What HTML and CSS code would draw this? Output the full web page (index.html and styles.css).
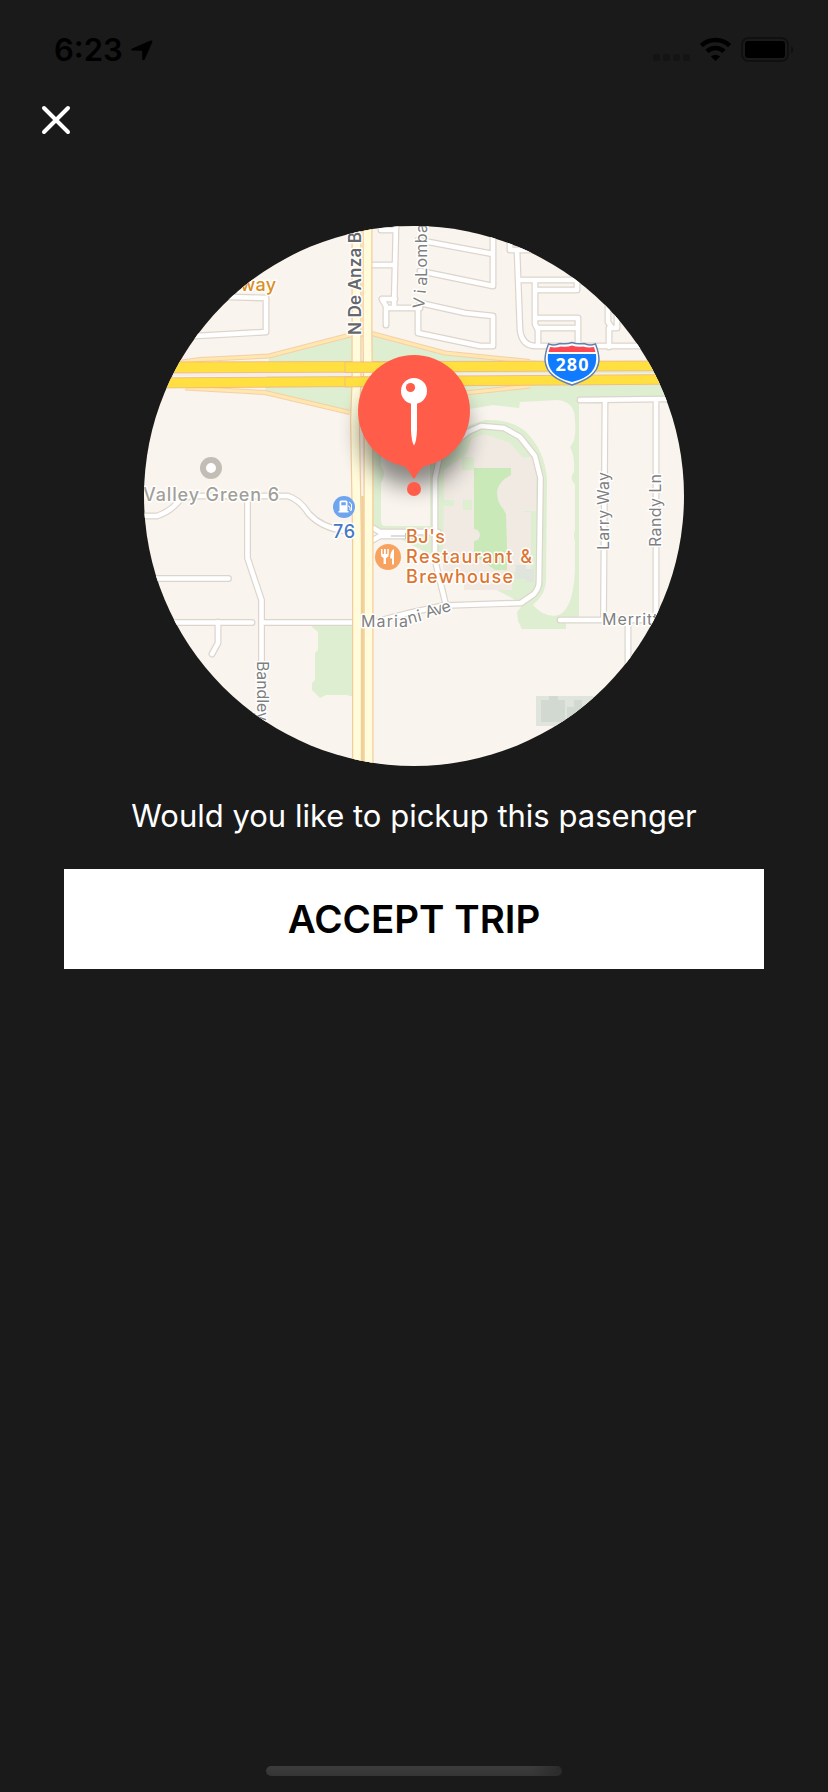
FILE: index.html
```html
<!DOCTYPE html>
<html lang="en">
<head>
<meta charset="utf-8">
<title>Pickup</title>
<link rel="stylesheet" href="styles.css">
</head>
<body>
<div class="screen">
  <header class="status">
    <div class="clock">
      <span class="time">6:23</span>
      <svg class="location" width="22" height="21" viewBox="0 0 22 21"><path d="M1.2 8.6 L19.6 0.5 Q22 0 21.2 2.2 L13.8 19.3 Q12.2 21.3 11.2 19.2 V11.4 Q11.2 10.7 10.5 10.7 L1.4 10.6 Q-.8 9.8 1.2 8.6Z"/></svg>
    </div>
    <svg class="indicators" width="142" height="26" viewBox="0 0 142 26">
      <g fill="#141414"><rect x="0" y="17" width="7" height="7" rx="2"/><rect x="10" y="17" width="7" height="7" rx="2"/><rect x="20" y="17" width="7" height="7" rx="2"/><rect x="30" y="17" width="7" height="7" rx="2"/></g>
      <g fill="none" stroke="#000" stroke-width="4.6"><path d="M48.4 8.6 A20.5 20.5 0 0 1 76.6 8.6"/><path d="M54 14.4 A12.5 12.5 0 0 1 71 14.4"/></g>
      <path d="M62.500 24.100 L57.900 19.500 A7 7 0 0 1 67.100 19.500Z"/>
      <rect x="89" y="1" width="46" height="23" rx="6.500" fill="none" stroke="#101010" stroke-width="2"/>
      <rect x="92" y="4" width="40" height="17" rx="3"/>
      <path d="M138.200 9 A4.500 4.500 0 0 1 138.200 16.500Z" fill="#101010"/>
    </svg>
  </header>
  <nav class="nav">
    <svg width="30" height="30" viewBox="0 0 30 30"><path d="M3 3 L27 27 M27 3 L3 27" stroke="#fff" stroke-width="4" stroke-linecap="round"/></svg>
  </nav>
  <main class="pickup">
    <svg class="map" width="540" height="540" viewBox="144 226 540 540">
      <defs>
        <clipPath id="disc"><circle cx="414" cy="496" r="270"/></clipPath>
        <filter id="soft" x="-50%" y="-50%" width="200%" height="200%"><feGaussianBlur stdDeviation="11"/></filter>
        <g id="streets" fill="none">
          <path d="M230 297 L266 298 V332 L196 336"/>
          <path d="M396 226 L394 308 M372 265 H394 M381 230 H396 M382 299 L386 306 V325 M382 299 H395 M387 308 H420"/>
          <path d="M418 240 L493 254 M493 230 V286 L420 271 M420 303 L465 313 L493 316 V346 H480 L418 333 V306"/>
          <path d="M510 240 V250 H530 M517 250 L520 330 Q522 346 536 346 H645 M519 280 H577 V290 H536 M535 280 V324 L538 330 V346 M535 318 H578 V346 M538 328 H577 M608 304 V322 L612 328 H617 V316 M609 328 V347"/>
          <path d="M580 400 L668 399 M605 402 L603.500 620 M656 402 V619 M560 620 H690 M628 622 V680"/>
          <path d="M468 432 L481 426 L504 428 L520 437 L535 456 L540.500 478 L539 582 Q539 588 534 594 L521 603 L446 605.500 L435 560 V478 L440 455 L468 432"/>
          <path d="M446 605 Q410 612 374 622 M144 516 H157 Q170 512 180 500 L190 496 H288 Q300 500 309 514 Q322 528 345 531 M247.500 500 V558 L261.500 600 V710 M150 578.500 H228.500 M160 622.500 H252 M218 622 V643 L212 654 M263 622.500 H354 M373 528 L380 532 H438 M373 540 L380 536 H410"/>
        </g>
        <g id="anza" fill="none">
          <path d="M356.500 220 V380 L355 420 L357 540 V780"/>
          <path d="M367.500 220 V340 L368.500 420 V780"/>
        </g>
        <path id="ramps" fill="none" d="M175 363 L200 359.500 L269 356 L350 335 L372 333.500 L445 353 L530 361.500 M185 388 L265 392.500 L350 412.500 M465 393 L530 386"/>
      </defs>
      <g clip-path="url(#disc)">
        <rect class="land" x="144" y="226" width="540" height="540"/>
        <path class="park" d="M269 358 L354 335 H372 L440 353 L545 361 H690 V400 L579 402 V617 H566 V629 H522 L518 621 L517 612 L523 604 L380 528 H372 V400 L354 414 L265 391Z"/>
        <path class="land" d="M385 526 Q381 526 381 520 V483 Q387 472 381 466 V450 H430 V526Z"/>
        <path class="land" d="M464 410 L493 405 L519 408 L520 402 L558 400 Q575 402 575 420 Q577 440 570 447 Q575 455 574 472 Q569 478 575 485 L575 530 Q573 536 575 541 V570 Q573 615 554 616 Q541 615 533 605 Q546 594 546 580 L547 480 Q545 450 525 431 Q510 419 485 420 L455 430Z"/>
        <path class="campus" d="M444 470 L466 455 L472 438 L485 434 L510 443 L523 458 V572 H512 V590 H464 V575 L443 570Z"/>
        <path class="park" d="M462 457 h12 v13 h-12z M441 500 h13 v6 h-13z M463 500 h9 v10 h-9z"/>
        <path class="lawn" d="M474 468 H511 V480 L498 500 L506 514 L507 548 V570 H495 L474 555Z"/>
        <path class="campus" d="M511 463 L525 457 H532 L536 475 V511 H506 Q497 505 497 491 Q499 481 511 475Z M474 529 a6 6 0 0 1 0 12z M510 512 h21 v58 h-21z"/>
        <path class="sheds" d="M516 565 h10 v4 h8 v13 h-8 v-3 h-11z M536 696 h57 v30 H536z"/>
        <path class="shed-detail" d="M541 700 h8 v-4 h9 v4 h7 v22 h-24z M567 707 h7 v-7 h8 v7 h9 v14 h-24z"/>
        <path class="park" d="M312 626 H354 V697 L347 695 H326 L320 698 L312 690 V683 L315 680 V653 L318 650 V632 L312 627Z"/>
        <path class="paved" d="M359 335 h6 v30 h-6z M150 373 H690 V376 H150z"/>
        <use href="#streets" class="casing"/>
        <use href="#streets" class="street"/>
        <path class="crossing" d="M391 536 H406 M405.500 533 V539"/>
        <use href="#ramps" class="ramp-edge"/>
        <use href="#ramps" class="ramp"/>
        <path class="freeway" d="M150 362 L690 361 V370.500 L150 373Z M150 378 L690 374.500 V384 L150 388Z"/>
        <use href="#anza" class="avenue-edge"/>
        <use href="#anza" class="avenue"/>
        <path class="median" d="M362.500 496 V780"/>
        <path class="freeway" d="M345 362 H440 V371.500 L345 372.500Z M345 377 L440 376 V385.500 L345 387Z"/>

        <g class="road-name">
          <text transform="translate(361 335) rotate(-90)" class="major" textLength="103">N De Anza B</text>
          <text transform="translate(424 309) rotate(-84)" textLength="32">Via</text>
          <text transform="translate(427 277) rotate(-90)" textLength="53">Lomba</text>
          <text transform="translate(609 550) rotate(-90)" textLength="78">Larry Way</text>
          <text transform="translate(660.500 547) rotate(-90)" textLength="73">Randy Ln</text>
          <text transform="translate(257 661) rotate(90)" textLength="60">Bandley</text>
          <text transform="translate(361 627)" textLength="47">Maria</text>
          <text transform="translate(409 624) rotate(-15)" textLength="14">ni</text>
          <text transform="translate(427 618) rotate(-17)" textLength="26">Ave</text>
          <text x="602" y="625" textLength="56">Merritt</text>
        </g>
        <g class="place">
          <text x="229" y="291" fill="#db8e23" textLength="47">dway</text>
          <text x="143" y="501" fill="#a29f98" textLength="136">Valley Green 6</text>
          <text x="333" y="538" fill="#4778c2" textLength="22">76</text>
          <g fill="#dc7632"><text x="406" y="543" textLength="39">BJ's</text><text x="406" y="563" textLength="126">Restaurant &amp;</text><text x="406" y="583" textLength="107">Brewhouse</text></g>
        </g>
        <circle cx="211" cy="468" r="8" fill="#fff" stroke="#c2beb6" stroke-width="6"/>
        <circle cx="344" cy="507" r="11" fill="#6fa4ef"/>
        <path fill="#fff" d="M339.500 502 q0-1.500 1.500-1.500 h5 q1.500 0 1.500 1.500 v9 h1 v1.500 h-10 v-1.500 h1z"/>
        <path fill="#6fa4ef" d="M341.300 502.300 h4.500 v3 h-4.500z"/>
        <path fill="none" stroke="#fff" d="M348 506 q2 0 2 2 v2 q1 1.500 1.500 0 v-6 l-2.500-2"/>
        <circle cx="388" cy="557" r="13" fill="#f7a25e"/>
        <path fill="#fff" d="M381 549 h1.500 v5 h1.500 v-5 h1.800 v5 h1.500 v-5 h1.500 v6 q0 2-2.800 3 v6 h-2.400 v-6 q-2.600-1-2.600-3z M394 549 v15.500 h-2 v-6 h-1.800 q0-8 3.800-9.500z"/>
        <path fill="#fff" stroke="#6481af" stroke-width="1.500" d="M548.500 344 Q555 346 560 343.500 Q567 344.500 572 342.500 Q577 344.500 584 343.500 Q589 346 595.500 344 Q599 353 599 360 C598 374 587 380 572 385 C557 380 546 374 545 360 Q545 353 548.500 344Z"/>
        <path fill="#fa4955" d="M550 347 Q556 348 561 346.500 Q567 347.500 572 345.500 Q577 347.500 583 346.500 Q588 348 594 347 L595.500 352 H548.500Z"/>
        <path fill="#107bff" d="M548 354 H596 Q599 376 572 382 Q545 376 548 354Z"/>
        <text class="shield" x="572" y="371" textLength="33">280</text>
        <circle cx="414" cy="432" r="54" opacity=".45" filter="url(#soft)"/>
        <path class="pin" d="M414 355 A56 56 0 0 1 426 465.700 C420 467 418 474 414 479 C410 474 408 467 402 465.700 A56 56 0 0 1 414 355Z"/>
        <circle class="pin" cx="414" cy="489" r="7"/>
        <circle cx="414" cy="391" r="13" fill="#fff"/>
        <circle class="pin" cx="410.500" cy="387.500" r="4.600"/>
        <path fill="#fff" d="M411 402 H417 V430 Q416.500 442 414 445.500 Q411.500 442 411 430Z"/>
      </g>
    </svg>
    <p class="question">Would you like to pickup this pasenger</p>
    <button class="accept">ACCEPT TRIP</button>
  </main>
  <div class="home"></div>
</div>
</body>
</html>
```
FILE: styles.css
```css
* { box-sizing: border-box; }
body { margin: 0; background: #1a1a1a; font-family: Inter, "Liberation Sans", sans-serif; }
svg { display: block; }
.screen { width: 828px; height: 1792px; display: flex; flex-direction: column; overflow: hidden; }
.status { height: 88px; padding: 30px 34px 0 54px; display: flex; justify-content: space-between; align-items: flex-start; }
.clock { display: flex; align-items: flex-start; }
.time { width: 77px; font-size: 31px; line-height: 40px; font-weight: 600; color: #000; white-space: nowrap; }
.location { margin-top: 10px; }
.indicators { margin-top: 7px; margin-right: -1px; }
.nav { height: 138px; padding: 17px 41px; }
.pickup { flex: 1; display: flex; flex-direction: column; align-items: center; }
.question { margin: 30px 0 33px; font-size: 31px; line-height: 40px; color: #fff; white-space: nowrap; }
.accept { width: 700px; height: 100px; border: 0; padding: 0; background: #fff; color: #000; font: 600 38.500px/100px Inter, "Liberation Sans", sans-serif; }
.home { align-self: center; width: 296px; height: 10px; border-radius: 5px; margin-bottom: 16px; background: linear-gradient(90deg, transparent 90%, #2a2a2a), linear-gradient(#3c3c3c, #353535); }

.land { fill: #f9f4ed; }
.park { fill: #deeed0; }
.lawn { fill: #c9e9b8; }
.campus { fill: #f0eae3; }
.paved { fill: #f3eee9; }
.sheds { fill: #dfe5dc; }
.shed-detail { fill: #d1d9d0; }
.casing { stroke: #ddd5cc; stroke-width: 7px; stroke-linejoin: round; stroke-linecap: round; }
.street { stroke: #fff; stroke-width: 4.600px; stroke-linejoin: round; stroke-linecap: round; }
.crossing { fill: none; stroke: #bbb; stroke-width: 1px; }
.ramp-edge { stroke: #f5cfab; stroke-width: 5px; }
.ramp { stroke: #ffe7ad; stroke-width: 3px; }
.freeway { fill: #ffe040; stroke: #f3bd7d; stroke-width: 1px; }
.avenue-edge { stroke: #f5cb9b; stroke-width: 10px; }
.avenue { stroke: #fffbdb; stroke-width: 7.600px; }
.median { stroke: #efcf95; stroke-width: 2.500px; }
.road-name text { font-size: 16px; fill: #7f7f80; stroke: #fff; stroke-width: 3px; paint-order: stroke; stroke-linejoin: round; }
.road-name .major { font-weight: 600; font-size: 17px; fill: #66676b; }
.place text { font-size: 18px; font-weight: 500; stroke: #fff; stroke-width: 3px; paint-order: stroke; stroke-linejoin: round; }
.shield { font: 700 18px "Noto Sans", sans-serif; fill: #fff; text-anchor: middle; }
.pin { fill: #ff5d49; }
```
